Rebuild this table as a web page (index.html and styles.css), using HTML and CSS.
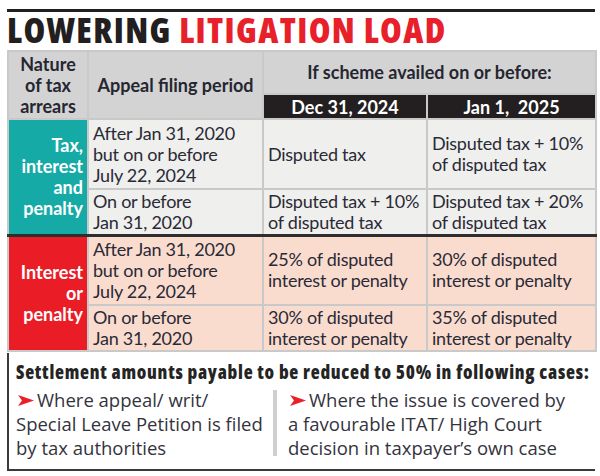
FILE: index.html
```html
<!DOCTYPE html>
<html lang="en">
<head>
<meta charset="utf-8">
<link rel="stylesheet" href="styles.css">
</head>
<body>
<div class="page">
  <div class="rule"></div>
  <h1 class="title">LOWERING <span class="red">LITIGATION LOAD</span></h1>
  <table class="grid">
    <colgroup>
      <col class="c1"><col class="c2"><col class="c3"><col class="c4">
    </colgroup>
    <thead>
      <tr class="h1row">
        <th rowspan="2" class="hd">Nature<br>of tax<br>arrears</th>
        <th rowspan="2" class="hd">Appeal filing period</th>
        <th colspan="2" class="hd">If scheme availed on or before:</th>
      </tr>
      <tr class="h2row">
        <th class="dark">Dec 31, 2024</th>
        <th class="dark">Jan 1,&nbsp; 2025</th>
      </tr>
    </thead>
    <tbody>
      <tr class="tall">
        <td rowspan="2" class="cat teal">Tax,<br>interest<br>and<br>penalty</td>
        <td class="g">After Jan 31, 2020<br>but on or before<br>July 22, 2024</td>
        <td class="g">Disputed tax</td>
        <td class="g">Disputed tax + 10%<br>of disputed tax</td>
      </tr>
      <tr class="short">
        <td class="g">On or before<br>Jan 31, 2020</td>
        <td class="g">Disputed tax + 10%<br>of disputed tax</td>
        <td class="g">Disputed tax + 20%<br>of disputed tax</td>
      </tr>
      <tr class="tall split">
        <td rowspan="2" class="cat redbg">Interest<br>or<br>penalty</td>
        <td class="p">After Jan 31, 2020<br>but on or before<br>July 22, 2024</td>
        <td class="p">25% of disputed<br>interest or penalty</td>
        <td class="p">30% of disputed<br>interest or penalty</td>
      </tr>
      <tr class="short">
        <td class="p">On or before<br>Jan 31, 2020</td>
        <td class="p">30% of disputed<br>interest or penalty</td>
        <td class="p">35% of disputed<br>interest or penalty</td>
      </tr>
    </tbody>
  </table>
  <section class="note">
    <p class="note-head">Settlement amounts payable to be reduced to 50% in following cases:</p>
    <div class="cases">
      <p class="case"><svg class="arrow" viewBox="0 0 16 11" width="16" height="11"><polygon points="0,0 16,5.5 0,11 4,5.5" fill="#e8202a"/></svg>Where appeal/ writ/<br>Special Leave Petition is filed<br>by tax authorities</p>
      <div class="divider"></div>
      <p class="case"><svg class="arrow" viewBox="0 0 16 11" width="16" height="11"><polygon points="0,0 16,5.5 0,11 4,5.5" fill="#e8202a"/></svg>Where the issue is covered by<br>a favourable ITAT/ High Court<br>decision in taxpayer’s own case</p>
    </div>
  </section>
</div>
</body>
</html>
```
FILE: styles.css
```css
html, body {
  margin: 0;
  padding: 0;
  background: #ffffff;
}
.page {
  width: 588px;
  padding: 9px 0 0 7px;
  font-family: "Lato", "Open Sans", sans-serif;
  color: #2a2a36;
}
.rule {
  height: 3px;
  background: #231f20;
}
.title {
  margin: 0;
  font-family: "Open Sans", sans-serif;
  font-size: 35px;
  line-height: 35px;
  font-weight: 800;
  font-stretch: 75%;
  letter-spacing: 1.4px;
  color: #231f20;
}
.red {
  color: #e8202a;
}
.grid {
  margin-top: 3px;
  width: 588px;
  border-collapse: collapse;
  table-layout: fixed;
  font-size: 18px;
  line-height: 21px;
  border: 2px solid #c6c6c6;
}
.c1 { width: 80px; }
.c2 { width: 175px; }
.c3 { width: 164px; }
.c4 { width: 169px; }
.grid th, .grid td {
  border: 2px solid #c9c9c9;
  padding: 0 4px;
  vertical-align: middle;
  white-space: nowrap;
}
.hd {
  background: #d3d3d3;
  font-weight: 700;
  text-align: center;
  color: #262631;
}
.h1row { height: 43px; }
.h2row { height: 25px; }
.dark {
  background: #231f20;
  color: #ffffff;
  font-weight: 700;
  text-align: center;
  line-height: 20px;
  border-top: 0;
  border-bottom: 0;
}
.tall { height: 70px; }
.short { height: 46px; }
.g, .p {
  text-align: left;
  letter-spacing: -0.25px;
}
.g {
  background: #efefed;
}
.p {
  background: #fadccf;
}
.cat {
  color: #ffffff;
  font-weight: 700;
  text-align: right;
  padding-right: 5px;
}
.teal {
  background: #16aaa6;
}
.redbg {
  background: #ea1d27;
}
.split td {
  border-top: 3px solid #2e2e2e;
}
.note {
  margin-top: 1px;
  border-left: 2px solid #3a3a3a;
  border-bottom: 2px solid #3a3a3a;
  height: 118px;
  padding: 8px 0 0 7px;
  box-sizing: border-box;
}
.note-head {
  margin: 0;
  font-family: "Open Sans", sans-serif;
  font-size: 18.5px;
  line-height: 22px;
  font-weight: 800;
  font-stretch: 75%;
  letter-spacing: 0.75px;
  color: #242424;
}
.cases {
  display: flex;
  margin-top: 5px;
}
.case {
  margin: 0;
  font-family: "Open Sans", sans-serif;
  font-size: 18.5px;
  line-height: 24px;
  color: #33333d;
  width: 257px;
}
.case:last-child {
  width: auto;
  padding-left: 11px;
}
.divider {
  width: 4px;
  background: #cfcfcf;
  margin: 2px 0 4px 0;
  flex: none;
}
.arrow {
  display: inline-block;
  vertical-align: 1px;
  margin: 0 3px 0 2px;
}
```
